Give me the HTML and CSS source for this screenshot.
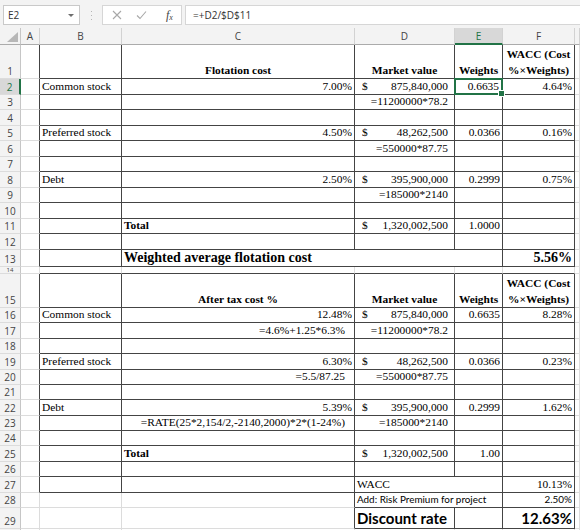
FILE: index.html
```html
<!DOCTYPE html>
<html>
<head>
<meta charset="utf-8">
<link rel="stylesheet" href="styles.css">
</head>
<body>
<div class="fbar">
  <div class="namebox"><span>E2</span><span class="caret"></span></div>
  <div class="dots"><svg width="3" height="11" viewBox="0 0 3 11"><rect x="1" y="1" width="1" height="1" fill="#b5b5b5"/><rect x="1" y="5" width="1" height="1" fill="#b5b5b5"/><rect x="1" y="9" width="1" height="1" fill="#b5b5b5"/></svg></div>
  <div class="tools">
    <svg class="ico" width="10" height="10" viewBox="0 0 10 10"><path d="M1 1L9 9M9 1L1 9" stroke="#a8a8a8" stroke-width="1.1" fill="none"/></svg>
    <svg class="ico" width="11" height="10" viewBox="0 0 11 10"><path d="M1 5.5L4 8.5L10 1.5" stroke="#a8a8a8" stroke-width="1.1" fill="none"/></svg>
    <span class="fx"><i>f</i><sub>x</sub></span>
  </div>
  <div class="input">=+D2/$D$11</div>
</div>
<div class="sheet">
  <div class="corner"><span class="tri"></span></div><div class="ch">A</div><div class="ch">B</div><div class="ch">C</div><div class="ch">D</div><div class="ch chs">E</div><div class="ch">F</div><div class="ch"></div>

  <div class="rh">1</div><div class="c kr"></div><div class="c k"></div><div class="c k ctr b">Flotation cost</div><div class="c k ctr b">Market value</div><div class="c k ctr b">Weights</div><div class="c k ctr b wrap">WACC (Cost<br>%×Weights)</div><div class="c"></div>
  <div class="rh rhs">2</div><div class="c kr"></div><div class="c k">Common stock</div><div class="c k r">7.00%</div><div class="c k acc"><span>$</span><span>875,840,000</span></div><div class="c k r sel">0.6635</div><div class="c k r">4.64%</div><div class="c"></div>
  <div class="rh">3</div><div class="c kr"></div><div class="c k"></div><div class="c k"></div><div class="c k r pf">=11200000*78.2</div><div class="c k"></div><div class="c k"></div><div class="c"></div>
  <div class="rh">4</div><div class="c kr"></div><div class="c k"></div><div class="c k"></div><div class="c k"></div><div class="c k"></div><div class="c k"></div><div class="c"></div>
  <div class="rh">5</div><div class="c kr"></div><div class="c k">Preferred stock</div><div class="c k r">4.50%</div><div class="c k acc"><span>$</span><span>48,262,500</span></div><div class="c k r">0.0366</div><div class="c k r">0.16%</div><div class="c"></div>
  <div class="rh">6</div><div class="c kr"></div><div class="c k"></div><div class="c k"></div><div class="c k r pf">=550000*87.75</div><div class="c k"></div><div class="c k"></div><div class="c"></div>
  <div class="rh">7</div><div class="c kr"></div><div class="c k"></div><div class="c k"></div><div class="c k"></div><div class="c k"></div><div class="c k"></div><div class="c"></div>
  <div class="rh">8</div><div class="c kr"></div><div class="c k">Debt</div><div class="c k r">2.50%</div><div class="c k acc"><span>$</span><span>395,900,000</span></div><div class="c k r">0.2999</div><div class="c k r">0.75%</div><div class="c"></div>
  <div class="rh">9</div><div class="c kr"></div><div class="c k"></div><div class="c k"></div><div class="c k r pf">=185000*2140</div><div class="c k"></div><div class="c k"></div><div class="c"></div>
  <div class="rh">10</div><div class="c kr"></div><div class="c k"></div><div class="c k"></div><div class="c k"></div><div class="c k"></div><div class="c k"></div><div class="c"></div>
  <div class="rh">11</div><div class="c kr"></div><div class="c k"></div><div class="c k b">Total</div><div class="c k acc"><span>$</span><span>1,320,002,500</span></div><div class="c k r">1.0000</div><div class="c k"></div><div class="c"></div>
  <div class="rh">12</div><div class="c kr"></div><div class="c k"></div><div class="c k"></div><div class="c k"></div><div class="c k"></div><div class="c k"></div><div class="c"></div>
  <div class="rh">13</div><div class="c kr"></div><div class="c k"></div><div class="c k big span3">Weighted average flotation cost</div><div class="c k r big">5.56%</div><div class="c"></div>
  <div class="rh rh14">14</div><div class="c"></div><div class="c kb"></div><div class="c kb"></div><div class="c kb"></div><div class="c kb"></div><div class="c kb"></div><div class="c"></div>

  <div class="rh">15</div><div class="c kr"></div><div class="c k"></div><div class="c k ctr b">After tax cost %</div><div class="c k ctr b">Market value</div><div class="c k ctr b">Weights</div><div class="c k ctr b wrap">WACC (Cost<br>%×Weights)</div><div class="c"></div>
  <div class="rh">16</div><div class="c kr"></div><div class="c k">Common stock</div><div class="c k r">12.48%</div><div class="c k acc"><span>$</span><span>875,840,000</span></div><div class="c k r">0.6635</div><div class="c k r">8.28%</div><div class="c"></div>
  <div class="rh">17</div><div class="c kr"></div><div class="c k"></div><div class="c k r pc">=4.6%+1.25*6.3%</div><div class="c k r pf">=11200000*78.2</div><div class="c k"></div><div class="c k"></div><div class="c"></div>
  <div class="rh">18</div><div class="c kr"></div><div class="c k"></div><div class="c k"></div><div class="c k"></div><div class="c k"></div><div class="c k"></div><div class="c"></div>
  <div class="rh">19</div><div class="c kr"></div><div class="c k">Preferred stock</div><div class="c k r">6.30%</div><div class="c k acc"><span>$</span><span>48,262,500</span></div><div class="c k r">0.0366</div><div class="c k r">0.23%</div><div class="c"></div>
  <div class="rh">20</div><div class="c kr"></div><div class="c k"></div><div class="c k r pc">=5.5/87.25</div><div class="c k r pf">=550000*87.75</div><div class="c k"></div><div class="c k"></div><div class="c"></div>
  <div class="rh">21</div><div class="c kr"></div><div class="c k"></div><div class="c k"></div><div class="c k"></div><div class="c k"></div><div class="c k"></div><div class="c"></div>
  <div class="rh">22</div><div class="c kr"></div><div class="c k">Debt</div><div class="c k r">5.39%</div><div class="c k acc"><span>$</span><span>395,900,000</span></div><div class="c k r">0.2999</div><div class="c k r">1.62%</div><div class="c"></div>
  <div class="rh">23</div><div class="c kr"></div><div class="c k"></div><div class="c k r pc">=RATE(25*2,154/2,-2140,2000)*2*(1-24%)</div><div class="c k r pf">=185000*2140</div><div class="c k"></div><div class="c k"></div><div class="c"></div>
  <div class="rh">24</div><div class="c kr"></div><div class="c k"></div><div class="c k"></div><div class="c k"></div><div class="c k"></div><div class="c k"></div><div class="c"></div>
  <div class="rh">25</div><div class="c kr"></div><div class="c k"></div><div class="c k b">Total</div><div class="c k acc"><span>$</span><span>1,320,002,500</span></div><div class="c k r">1.00</div><div class="c k"></div><div class="c"></div>
  <div class="rh">26</div><div class="c kr"></div><div class="c k"></div><div class="c k"></div><div class="c k"></div><div class="c k"></div><div class="c k"></div><div class="c"></div>
  <div class="rh">27</div><div class="c kr"></div><div class="c k"></div><div class="c k"></div><div class="c k span2">WACC</div><div class="c k r">10.13%</div><div class="c"></div>
  <div class="rh">28</div><div class="c"></div><div class="c"></div><div class="c kr"></div><div class="c k span2 s">Add: Risk Premium for project</div><div class="c k r s">2.50%</div><div class="c"></div>
  <div class="rh">29</div><div class="c"></div><div class="c"></div><div class="c kr"></div><div class="c k sb">Discount rate</div><div class="c k"></div><div class="c k r sb">12.63%</div><div class="c"></div>
  <div class="rh"></div><div class="c"></div><div class="c"></div><div class="c"></div><div class="c"></div><div class="c"></div><div class="c"></div><div class="c"></div>
</div>
</body>
</html>
```
FILE: styles.css
```css
* { box-sizing: border-box; margin: 0; padding: 0; }
html, body { width: 580px; height: 530px; overflow: hidden; background: #fff; }
body { font-family: "Liberation Serif", "Times New Roman", serif; font-size: 11.4px; color: #000; }

.fbar { height: 28px; background: #f3f3f3; display: flex; align-items: flex-start; padding-top: 5px; }
.namebox { margin-left: 3px; width: 77px; height: 20px; background: #fff; border: 1px solid #c9c9c9; display: flex; align-items: center; justify-content: space-between; padding: 0 5px 0 4px; font-family: "Open Sans", "Liberation Sans", sans-serif; font-size: 10px; color: #333; }
.caret { width: 0; height: 0; border-left: 3px solid transparent; border-right: 3px solid transparent; border-top: 3px solid #6e6e6e; }
.dots { width: 22px; height: 20px; display: flex; align-items: center; justify-content: center; }
.tools { width: 80px; height: 20px; background: #fff; border: 1px solid #d6d6d6; display: flex; align-items: center; padding-left: 9px; gap: 14px; }
.fx { font-family: "Liberation Serif", serif; font-size: 12px; color: #444; margin-left: 5px; line-height: 1; }
.fx sub { font-size: 8px; font-style: italic; vertical-align: -1px; }
.input { flex: 1; margin-left: 3px; height: 20px; background: #fff; border: 1px solid #d6d6d6; border-right: none; display: flex; align-items: center; padding-left: 7px; font-family: "Open Sans", "Liberation Sans", sans-serif; font-size: 10px; color: #333; }

.sheet { display: grid; grid-template-columns: 21px 19px 82px 233px 100px 48px 72px 1fr; grid-template-rows: 17px 34px repeat(11, 15.5px) 17.5px 7px 34px repeat(13, 15.385px) 21px 10px; }

.corner { background: #f3f3f3; border-right: 1px solid #c6c6c6; border-bottom: 1px solid #ababab; display: flex; align-items: flex-end; justify-content: flex-end; padding: 0 2px 2px 0; }
.tri { width: 0; height: 0; border-left: 11px solid transparent; border-bottom: 10px solid #b7b7b7; }
.ch { background: #f3f3f3; border-right: 1px solid #d2d2d2; border-bottom: 1px solid #ababab; display: flex; align-items: center; justify-content: center; font-family: "Open Sans", "Liberation Sans", sans-serif; font-size: 10px; color: #444; }
.chs { background: #d8d8d8; color: #217346; border-bottom: 2px solid #217346; }
.rh { background: #f3f3f3; border-right: 1px solid #c6c6c6; border-bottom: 1px solid #dcdcdc; display: flex; align-items: flex-end; justify-content: center; font-family: "Open Sans", "Liberation Sans", sans-serif; font-size: 10px; line-height: 14px; color: #444; overflow: hidden; }
.rh14 { align-items: center; font-size: 6px; line-height: 6px; overflow: visible; }
.rhs { background: #d8d8d8; color: #217346; border-right: 2px solid #217346; }

.c { border-right: 1px solid #dcdcdc; border-bottom: 1px solid #dcdcdc; display: flex; align-items: flex-end; padding: 0 2px 1px 2px; line-height: 13px; white-space: nowrap; }
.k { border-right-color: #444; border-bottom-color: #444; }
.kr { border-right-color: #444; }
.kb { border-bottom-color: #444; }
.r { justify-content: flex-end; }
.ctr { justify-content: center; text-align: center; }
.b { font-weight: bold; }
.wrap { white-space: normal; line-height: 15.5px; padding-bottom: 0; }
.acc { justify-content: space-between; padding-left: 7px; padding-right: 6px; }
.pf { padding-right: 6px; }
.pc { padding-right: 9px; }
.span3 { grid-column: span 3; }
.span2 { grid-column: span 2; }
.big { font-weight: bold; font-size: 14px; line-height: 16px; padding-bottom: 0; }
.s { font-family: Lato, "Open Sans", sans-serif; font-size: 9.9px; }
.sb { font-family: Lato, "Open Sans", sans-serif; font-weight: bold; font-size: 15px; line-height: 19px; padding-bottom: 0; }
.sel { position: relative; z-index: 2; padding-right: 3px; }
.sel::after { content: ""; position: absolute; left: -1px; top: -1px; right: -1px; bottom: -1px; border: 2px solid #217346; }
.sel::before { content: ""; position: absolute; right: -3px; bottom: -3px; width: 5px; height: 5px; background: #217346; border: 1px solid #fff; z-index: 3; }
```
